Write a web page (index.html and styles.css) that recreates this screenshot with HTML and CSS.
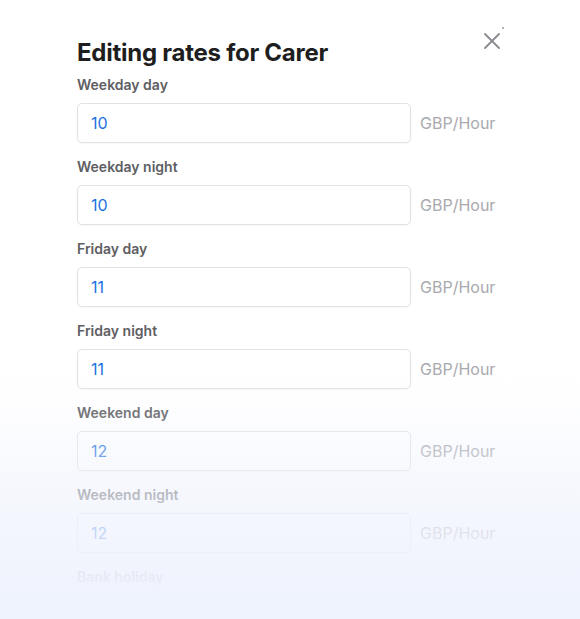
FILE: index.html
```html
<!DOCTYPE html>
<html>
<head>
<meta charset="utf-8">
<link rel="stylesheet" href="styles.css">
</head>
<body>
<div class="modal">
  <button class="close" aria-label="Close">
    <svg width="18" height="18" viewBox="0 0 18 18"><path d="M2 2 L16 16 M16 2 L2 16" stroke="#8a8a90" stroke-width="1.8" stroke-linecap="round" fill="none"/></svg>
  </button>
  <span class="dot"></span>
  <h1 class="title">Editing rates for Carer</h1>
  <div class="field">
    <label class="label">Weekday day</label>
    <div class="row"><div class="input">10</div><span class="unit">GBP/Hour</span></div>
  </div>
  <div class="field">
    <label class="label">Weekday night</label>
    <div class="row"><div class="input">10</div><span class="unit">GBP/Hour</span></div>
  </div>
  <div class="field">
    <label class="label">Friday day</label>
    <div class="row"><div class="input">11</div><span class="unit">GBP/Hour</span></div>
  </div>
  <div class="field">
    <label class="label">Friday night</label>
    <div class="row"><div class="input">11</div><span class="unit">GBP/Hour</span></div>
  </div>
  <div class="field">
    <label class="label">Weekend day</label>
    <div class="row"><div class="input">12</div><span class="unit">GBP/Hour</span></div>
  </div>
  <div class="field">
    <label class="label">Weekend night</label>
    <div class="row"><div class="input">12</div><span class="unit">GBP/Hour</span></div>
  </div>
  <div class="field">
    <label class="label">Bank holiday</label>
  </div>
  <div class="fade"></div>
</div>
</body>
</html>
```
FILE: styles.css
```css
html, body {
  margin: 0;
  padding: 0;
  background: #ffffff;
  overflow: hidden;
  height: 619px;
}
.modal {
  position: relative;
  height: 619px;
  padding: 38px 0 0 77px;
  box-sizing: border-box;
  font-family: Inter, "Noto Sans", sans-serif;
}
.title {
  margin: 0 0 8px 0;
  font-size: 24px;
  line-height: 30px;
  font-weight: 700;
  color: #1e1e1e;
  letter-spacing: -0.25px;
}
.close {
  position: absolute;
  top: 32px;
  left: 483px;
  border: 0;
  background: none;
  padding: 0;
  width: 18px;
  height: 18px;
}
.close svg { display: block; }
.dot {
  position: absolute;
  top: 27px;
  left: 502px;
  width: 2px;
  height: 2px;
  border-radius: 50%;
  background: #9a9aa0;
}
.field {
  display: flex;
  flex-direction: column;
  margin-bottom: 15px;
}
.label {
  font-size: 14px;
  line-height: 18px;
  font-weight: 600;
  color: #5e5e63;
  margin-bottom: 9px;
}
.row {
  display: flex;
  align-items: center;
  gap: 9px;
}
.input {
  width: 334px;
  height: 40px;
  box-sizing: border-box;
  border: 1px solid #e2e2e4;
  border-radius: 5px;
  padding: 0 13px;
  display: flex;
  align-items: center;
  font-size: 16px;
  color: #1b73e0;
  box-shadow: 0 1px 2px rgba(0,0,0,0.04);
}
.unit {
  font-size: 16px;
  color: #a9a9ae;
}
.fade {
  position: absolute;
  left: 0;
  right: 0;
  top: 370px;
  bottom: 0;
  background: linear-gradient(to bottom, rgba(240,243,253,0) 0%, rgba(240,243,253,0.15) 17%, rgba(240,243,253,0.38) 33%, rgba(240,243,253,0.62) 50%, rgba(240,243,253,0.78) 66%, rgba(240,243,253,0.94) 83%, #eff3fd 92%, #eff3fd 100%);
}
```
